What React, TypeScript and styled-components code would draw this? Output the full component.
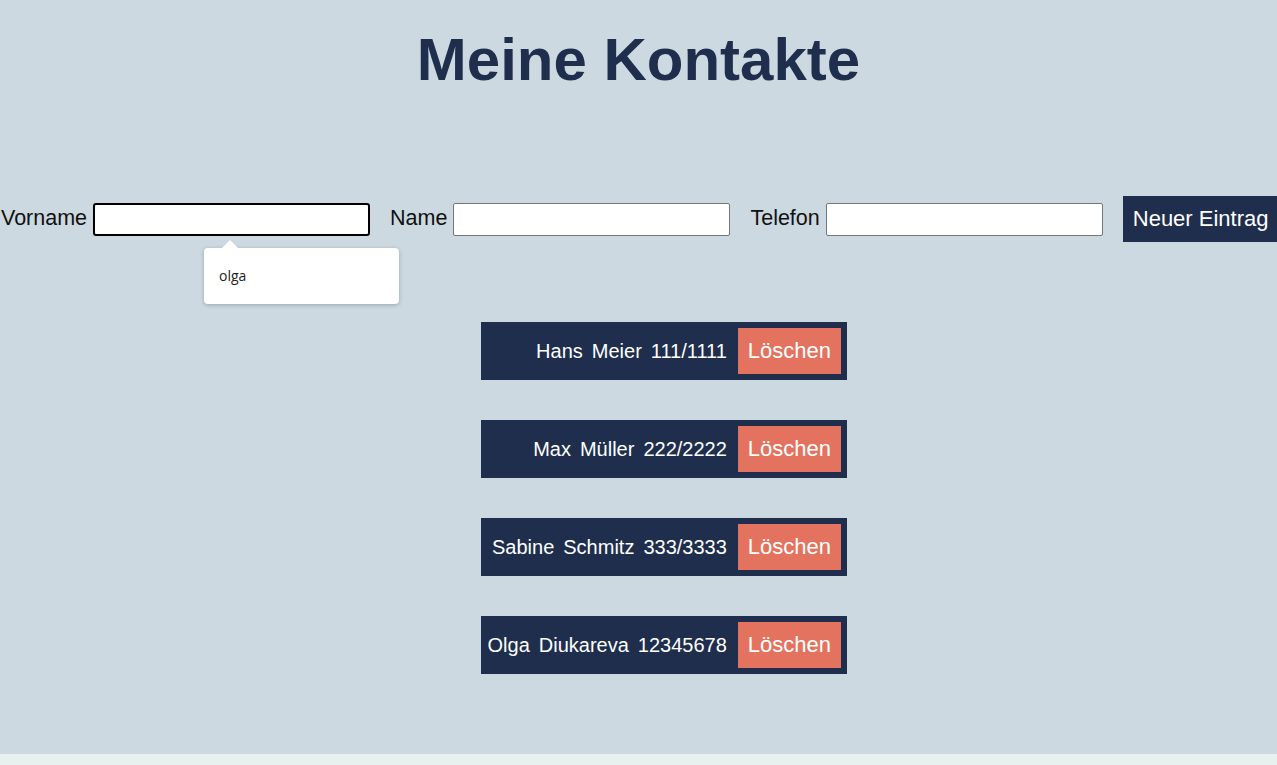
import React from "react";
import styled, { createGlobalStyle } from "styled-components";

const GlobalStyle = createGlobalStyle`
  html, body {
    margin: 0;
    padding: 0;
    background: #e9f0f0;
    font-family: "Liberation Sans", Arial, sans-serif;
  }
`;

const Page = styled.div`
  background: #cdd9e1;
  min-height: 754px;
  box-sizing: border-box;
  padding: 25px 0 80px;
  display: flex;
  flex-direction: column;
`;

const Title = styled.h1`
  margin: 0;
  text-align: center;
  font-size: 60px;
  line-height: 69px;
  font-weight: 700;
  color: #1e2e4c;
`;

const FormRow = styled.div`
  margin-top: 102px;
  display: flex;
  align-items: center;
  gap: 20px;
  height: 46px;
  padding-left: 1px;
`;

const Field = styled.div`
  position: relative;
  display: flex;
  align-items: center;
  gap: 6px;
`;

const Label = styled.label`
  font-size: 21.5px;
  color: #111;
  line-height: 1;
`;

const Input = styled.input<{ $focused?: boolean }>`
  box-sizing: border-box;
  width: 277px;
  height: 33px;
  margin: 0;
  background: #fff;
  border: ${(p) => (p.$focused ? "2px solid #000" : "1px solid #767676")};
  border-radius: ${(p) => (p.$focused ? "3px" : "2px")};
  outline: none;
  font-size: 16px;
  padding: 0 4px;
`;

const Popup = styled.div`
  position: absolute;
  left: 203px;
  top: 45px;
  width: 195px;
  height: 56px;
  box-sizing: border-box;
  background: #fff;
  border-radius: 4px;
  box-shadow: 0 1px 4px rgba(0, 0, 0, 0.25);
  padding-left: 15px;
  display: flex;
  align-items: center;
  font-family: "Open Sans", "Noto Sans", sans-serif;
  font-size: 14px;
  color: #222;
  z-index: 2;

  &::before {
    content: "";
    position: absolute;
    left: 18px;
    top: -8px;
    width: 0;
    height: 0;
    border-left: 8px solid transparent;
    border-right: 8px solid transparent;
    border-bottom: 8px solid #fff;
  }
`;

const AddButton = styled.button`
  height: 46px;
  padding: 0 10px;
  margin: 0;
  border: none;
  background: #1e2e4c;
  color: #fff;
  font-family: "Liberation Sans", Arial, sans-serif;
  font-size: 22px;
  white-space: nowrap;
`;

const List = styled.div`
  margin-top: 80px;
  display: flex;
  flex-direction: column;
  align-items: center;
  gap: 40px;
  padding-left: 51px;
`;

const Card = styled.div`
  box-sizing: border-box;
  width: 366px;
  height: 58px;
  padding: 6px;
  background: #1e2e4c;
  display: flex;
  justify-content: flex-end;
  align-items: center;
  gap: 11px;
`;

const Info = styled.div`
  display: flex;
  gap: 9px;
  color: #fff;
  font-size: 20px;
`;

const DeleteButton = styled.button`
  height: 46px;
  padding: 0 10px;
  margin: 0;
  border: none;
  background: #e3735e;
  color: #fff;
  font-family: "Liberation Sans", Arial, sans-serif;
  font-size: 22px;
`;

const contacts = [
  { first: "Hans", last: "Meier", phone: "111/1111" },
  { first: "Max", last: "Müller", phone: "222/2222" },
  { first: "Sabine", last: "Schmitz", phone: "333/3333" },
  { first: "Olga", last: "Diukareva", phone: "12345678" },
];

export default function App() {
  return (
    <>
      <GlobalStyle />
      <Page>
        <Title>Meine Kontakte</Title>
        <FormRow>
          <Field>
            <Label>Vorname</Label>
            <Input $focused />
            <Popup>olga</Popup>
          </Field>
          <Field>
            <Label>Name</Label>
            <Input />
          </Field>
          <Field>
            <Label>Telefon</Label>
            <Input />
          </Field>
          <AddButton>Neuer Eintrag</AddButton>
        </FormRow>
        <List>
          {contacts.map((c) => (
            <Card key={c.phone}>
              <Info>
                <span>{c.first}</span>
                <span>{c.last}</span>
                <span>{c.phone}</span>
              </Info>
              <DeleteButton>Löschen</DeleteButton>
            </Card>
          ))}
        </List>
      </Page>
    </>
  );
}
